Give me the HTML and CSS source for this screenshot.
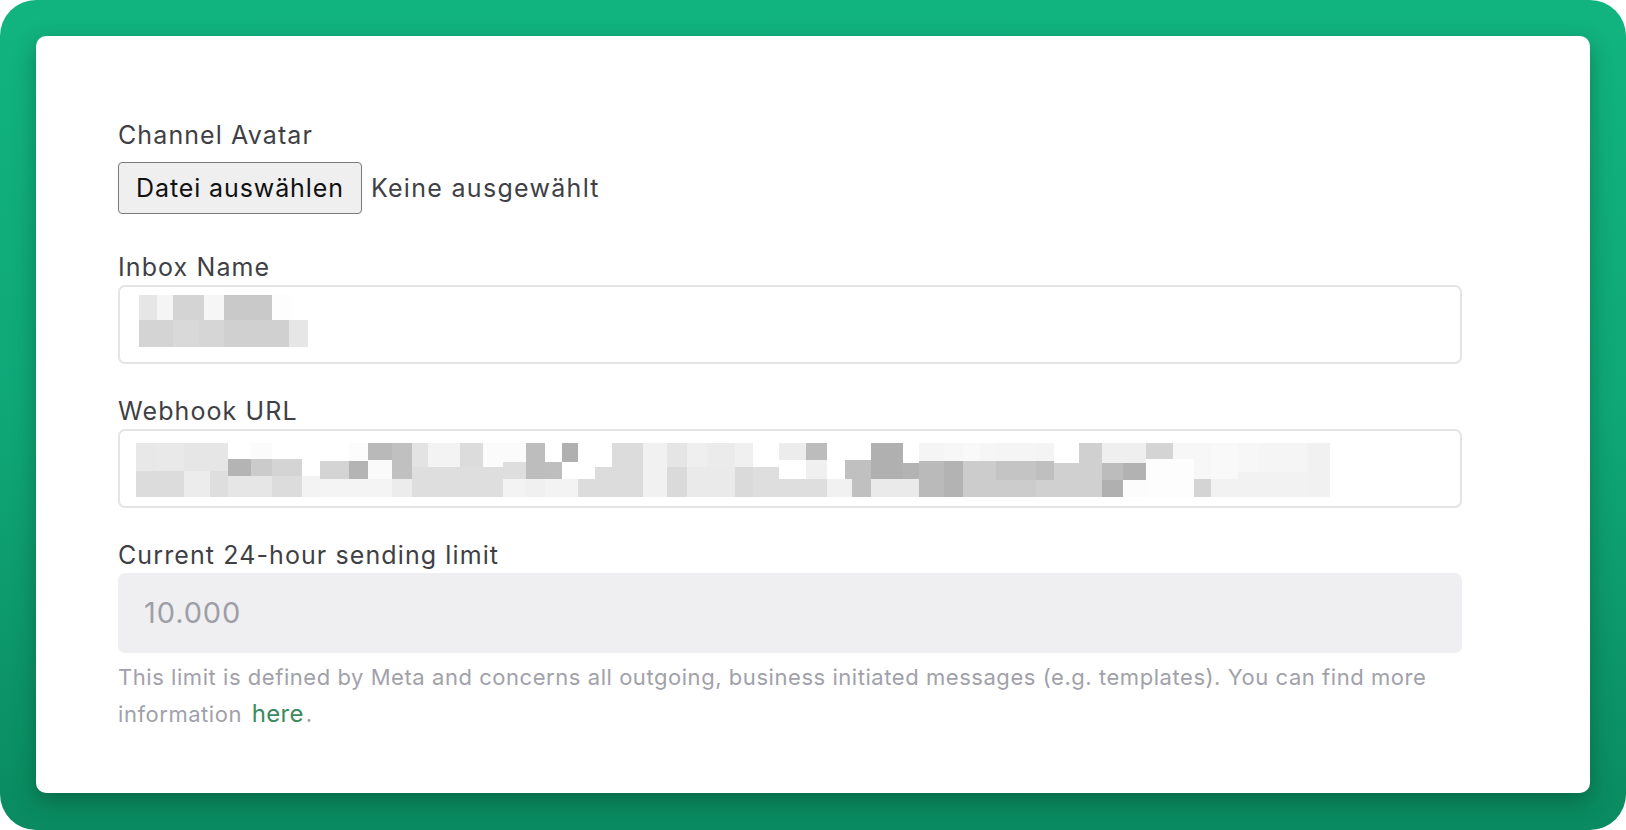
FILE: index.html
```html
<!DOCTYPE html>
<html lang="de">
<head>
<meta charset="utf-8">
<title>Inbox Settings</title>
<link rel="stylesheet" href="styles.css">
</head>
<body>
<div class="frame">
  <div class="card">
    <form class="form">
      <div class="field field-avatar">
        <label class="label">Channel Avatar</label>
        <div class="file-row">
          <button class="file-btn" type="button">Datei auswählen</button>
          <span class="file-name">Keine ausgewählt</span>
        </div>
      </div>

      <div class="field">
        <label class="label">Inbox Name</label>
        <div class="input">
          <svg class="blur blur-name" width="169" height="52" viewBox="139 296 169 52" aria-hidden="true">
            <rect x="139" y="296" width="18" height="25" fill="#e6e6e6"/>
            <rect x="157" y="296" width="16" height="25" fill="#f5f5f5"/>
            <rect x="173" y="296" width="31" height="25" fill="#d4d4d4"/>
            <rect x="204" y="296" width="20" height="25" fill="#f6f6f6"/>
            <rect x="224" y="296" width="48" height="25" fill="#c9c9c9"/>
            <rect x="272" y="296" width="20" height="25" fill="#fdfdfd"/>
            <rect x="139" y="321" width="34" height="27" fill="#d4d4d4"/>
            <rect x="173" y="321" width="26" height="27" fill="#d9d9d9"/>
            <rect x="199" y="321" width="25" height="27" fill="#d6d6d6"/>
            <rect x="224" y="321" width="65" height="27" fill="#d0d0d0"/>
            <rect x="289" y="321" width="19" height="27" fill="#e6e6e6"/>
          </svg>
        </div>
      </div>

      <div class="field">
        <label class="label">Webhook URL</label>
        <div class="input">
          <svg class="blur blur-url" width="1194" height="54" viewBox="136 444 1194 54" aria-hidden="true">
            <rect x="136" y="444" width="20" height="28" fill="#e8e8e8"/><rect x="136" y="472" width="20" height="26" fill="#dcdcdc"/>
            <rect x="156" y="444" width="28" height="28" fill="#e9e9e9"/><rect x="156" y="472" width="28" height="26" fill="#dcdcdc"/>
            <rect x="184" y="444" width="26" height="28" fill="#e6e6e6"/><rect x="184" y="472" width="26" height="26" fill="#ececec"/>
            <rect x="210" y="444" width="18" height="28" fill="#e6e6e6"/><rect x="210" y="472" width="18" height="26" fill="#dedede"/>
            <rect x="228" y="460" width="23" height="17" fill="#b4b4b4"/><rect x="228" y="477" width="23" height="21" fill="#e6e6e6"/>
            <rect x="251" y="444" width="21" height="16" fill="#fbfbfb"/><rect x="251" y="460" width="21" height="17" fill="#cbcbcb"/><rect x="251" y="477" width="21" height="21" fill="#e6e6e6"/>
            <rect x="272" y="460" width="30" height="17" fill="#d4d4d4"/><rect x="272" y="477" width="30" height="21" fill="#dcdcdc"/>
            <rect x="302" y="477" width="18" height="21" fill="#f3f3f3"/>
            <rect x="320" y="462" width="29" height="18" fill="#d4d4d4"/><rect x="320" y="480" width="29" height="18" fill="#f4f4f4"/>
            <rect x="349" y="444" width="19" height="18" fill="#fcfcfc"/><rect x="349" y="462" width="19" height="18" fill="#b4b4b4"/><rect x="349" y="480" width="19" height="18" fill="#f4f4f4"/>
            <rect x="368" y="444" width="24" height="17" fill="#b9b9b9"/><rect x="368" y="461" width="24" height="19" fill="#fafafa"/><rect x="368" y="480" width="24" height="18" fill="#f4f4f4"/>
            <rect x="392" y="444" width="20" height="36" fill="#c0c0c0"/><rect x="392" y="480" width="20" height="18" fill="#ececec"/>
            <rect x="412" y="444" width="16" height="24" fill="#e3e3e3"/><rect x="412" y="468" width="16" height="30" fill="#dedede"/>
            <rect x="428" y="444" width="32" height="24" fill="#f3f3f3"/><rect x="428" y="468" width="32" height="30" fill="#dedede"/>
            <rect x="460" y="444" width="23" height="24" fill="#dcdcdc"/><rect x="460" y="468" width="23" height="30" fill="#dedede"/>
            <rect x="483" y="444" width="20" height="24" fill="#fbfbfb"/><rect x="483" y="468" width="20" height="30" fill="#dedede"/>
            <rect x="503" y="444" width="23" height="19" fill="#fbfbfb"/><rect x="503" y="463" width="23" height="17" fill="#dedede"/><rect x="503" y="480" width="23" height="18" fill="#f3f3f3"/>
            <rect x="526" y="444" width="19" height="36" fill="#bdbdbd"/><rect x="526" y="480" width="19" height="18" fill="#f0f0f0"/>
            <rect x="545" y="463" width="17" height="17" fill="#bebebe"/><rect x="545" y="480" width="17" height="18" fill="#f3f3f3"/>
            <rect x="562" y="444" width="16" height="19" fill="#b0b0b0"/><rect x="562" y="480" width="16" height="18" fill="#f3f3f3"/>
            <rect x="578" y="480" width="17" height="18" fill="#dcdcdc"/>
            <rect x="595" y="468" width="17" height="30" fill="#dcdcdc"/>
            <rect x="612" y="444" width="31" height="54" fill="#dcdcdc"/>
            <rect x="643" y="444" width="24" height="54" fill="#f1f1f1"/>
            <rect x="667" y="444" width="20" height="24" fill="#e5e5e5"/><rect x="667" y="468" width="20" height="30" fill="#dadada"/>
            <rect x="687" y="444" width="20" height="24" fill="#efefef"/><rect x="687" y="468" width="20" height="30" fill="#eaeaea"/>
            <rect x="707" y="444" width="28" height="24" fill="#ebebeb"/><rect x="707" y="468" width="28" height="30" fill="#eaeaea"/>
            <rect x="735" y="444" width="18" height="24" fill="#f0f0f0"/><rect x="735" y="468" width="18" height="30" fill="#dadada"/>
            <rect x="753" y="468" width="26" height="30" fill="#dedede"/>
            <rect x="779" y="444" width="27" height="17" fill="#ececec"/><rect x="779" y="480" width="27" height="18" fill="#dedede"/>
            <rect x="806" y="444" width="21" height="17" fill="#bcbcbc"/><rect x="806" y="461" width="21" height="19" fill="#f0f0f0"/><rect x="806" y="480" width="21" height="18" fill="#dedede"/>
            <rect x="827" y="480" width="18" height="18" fill="#f1f1f1"/>
            <rect x="845" y="461" width="7" height="19" fill="#c0c0c0"/><rect x="845" y="480" width="7" height="18" fill="#f1f1f1"/>
            <rect x="852" y="461" width="19" height="37" fill="#c0c0c0"/>
            <rect x="871" y="444" width="32" height="36" fill="#b0b0b0"/><rect x="871" y="480" width="32" height="18" fill="#eaeaea"/>
            <rect x="903" y="464" width="16" height="16" fill="#b3b3b3"/><rect x="903" y="480" width="16" height="18" fill="#eaeaea"/>
            <rect x="919" y="444" width="25" height="18" fill="#f5f5f5"/><rect x="919" y="462" width="25" height="36" fill="#bababa"/>
            <rect x="944" y="444" width="19" height="18" fill="#f7f7f7"/><rect x="944" y="462" width="19" height="36" fill="#b3b3b3"/>
            <rect x="963" y="444" width="17" height="18" fill="#f9f9f9"/><rect x="963" y="462" width="17" height="36" fill="#cccccc"/>
            <rect x="980" y="444" width="16" height="18" fill="#f6f6f6"/><rect x="980" y="462" width="16" height="36" fill="#cccccc"/>
            <rect x="996" y="444" width="40" height="18" fill="#f5f5f5"/><rect x="996" y="462" width="40" height="19" fill="#c4c4c4"/><rect x="996" y="481" width="40" height="17" fill="#cccccc"/>
            <rect x="1036" y="444" width="18" height="18" fill="#f4f4f4"/><rect x="1036" y="462" width="18" height="19" fill="#bfbfbf"/><rect x="1036" y="481" width="18" height="17" fill="#d0d0d0"/>
            <rect x="1054" y="464" width="25" height="34" fill="#d0d0d0"/>
            <rect x="1079" y="444" width="23" height="54" fill="#d0d0d0"/>
            <rect x="1102" y="444" width="21" height="20" fill="#efefef"/><rect x="1102" y="464" width="21" height="17" fill="#bcbcbc"/><rect x="1102" y="481" width="21" height="17" fill="#b0b0b0"/>
            <rect x="1123" y="444" width="23" height="20" fill="#efefef"/><rect x="1123" y="464" width="23" height="17" fill="#b2b2b2"/><rect x="1123" y="481" width="23" height="17" fill="#fcfcfc"/>
            <rect x="1146" y="444" width="27" height="16" fill="#d4d4d4"/><rect x="1146" y="460" width="27" height="38" fill="#fdfdfd"/>
            <rect x="1173" y="444" width="21" height="16" fill="#f7f7f7"/><rect x="1173" y="460" width="21" height="38" fill="#fdfdfd"/>
            <rect x="1194" y="444" width="17" height="36" fill="#f7f7f7"/><rect x="1194" y="480" width="17" height="18" fill="#d4d4d4"/>
            <rect x="1211" y="444" width="27" height="36" fill="#f9f9f9"/><rect x="1211" y="480" width="27" height="18" fill="#f2f2f2"/>
            <rect x="1238" y="444" width="21" height="29" fill="#f7f7f7"/><rect x="1238" y="473" width="21" height="25" fill="#f2f2f2"/>
            <rect x="1259" y="444" width="48" height="29" fill="#f5f5f5"/><rect x="1259" y="473" width="48" height="25" fill="#f2f2f2"/>
            <rect x="1307" y="444" width="23" height="54" fill="#f1f1f1"/>
          </svg>
        </div>
      </div>

      <div class="field">
        <label class="label">Current 24-hour sending limit</label>
        <div class="input input-disabled">10.000</div>
        <p class="help">This limit is defined by Meta and concerns all outgoing, business initiated messages (e.g. templates). You can find more information <a class="help-link" href="#">here</a>.</p>
      </div>
    </form>
  </div>
</div>
</body>
</html>
```

FILE: styles.css
```css
* {
  box-sizing: border-box;
}

html, body {
  margin: 0;
  padding: 0;
  background: #ffffff;
}

body {
  width: 1626px;
  height: 830px;
  overflow: hidden;
  font-family: "Inter", "Noto Sans", "Liberation Sans", sans-serif;
}

.frame {
  width: 1626px;
  height: 830px;
  border-radius: 36px;
  background: linear-gradient(180deg, #11b47f 0%, #0fa776 50%, #0a8a60 100%);
  padding: 36px 36px 37px 36px;
}

.card {
  width: 1554px;
  height: 757px;
  background: #ffffff;
  border-radius: 10px;
  box-shadow: 0 8px 22px rgba(0, 40, 20, 0.35);
  padding: 81px 0 0 82px;
}

.form {
  width: 1344px;
  display: flex;
  flex-direction: column;
  gap: 29px;
  margin: 0;
}

.field {
  display: flex;
  flex-direction: column;
}

.field-avatar {
  margin-bottom: 6px;
}

.label {
  font-size: 25px;
  line-height: 36px;
  height: 36px;
  color: #3f3f46;
  letter-spacing: 1.1px;
}

.file-row {
  display: flex;
  align-items: center;
  margin-top: 9px;
  gap: 9px;
}

.file-btn {
  height: 52px;
  padding: 0 17px;
  font-family: "Inter", "Noto Sans", "Liberation Sans", sans-serif;
  font-size: 25px;
  color: #111111;
  background: #efefef;
  border: 1.5px solid #7a7a7a;
  border-radius: 4px;
  letter-spacing: 0.9px;
}

.file-name {
  font-size: 25px;
  color: #3f3f46;
  letter-spacing: 1.3px;
}

.input {
  height: 79px;
  border: 2px solid #e4e4e7;
  border-radius: 7px;
  background: #ffffff;
  overflow: hidden;
}

.blur {
  display: block;
}

.blur-name {
  margin: 8px 0 0 19px;
}

.blur-url {
  margin: 12px 0 0 16px;
}

.input-disabled {
  height: 80px;
  background: #efeff1;
  border-color: #efeff1;
  color: #9e9ea6;
  font-size: 29px;
  line-height: 76px;
  padding: 0 24px;
  letter-spacing: 0.9px;
}

.help {
  margin: 6px 0 0 0;
  font-size: 22px;
  line-height: 37px;
  color: #a1a1aa;
  letter-spacing: 0.55px;
}

.help-link {
  display: inline-block;
  margin: 0 2px 0 3px;
  color: #3b8a5e;
  text-decoration: none;
  font-size: 24px;
  line-height: 30px;
  letter-spacing: 0.3px;
}
```
